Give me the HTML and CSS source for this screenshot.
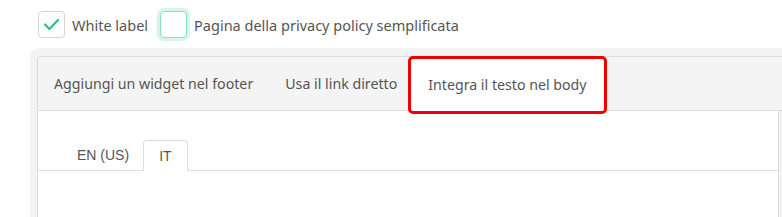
FILE: index.html
```html
<!DOCTYPE html>
<html lang="it">
<head>
<meta charset="utf-8">
<link rel="stylesheet" href="styles.css">
</head>
<body>
<div class="options">
  <label class="opt">
    <span class="box checked">
      <svg width="17" height="13" viewBox="0 0 17 13"><path d="M2 6.5 L6.5 11 L15 2" fill="none" stroke="#2fbf85" stroke-width="2.2" stroke-linecap="round" stroke-linejoin="round"/></svg>
    </span>
    <span class="opt-text">White label</span>
  </label>
  <label class="opt">
    <span class="box focused"></span>
    <span class="opt-text">Pagina della privacy policy semplificata</span>
  </label>
</div>
<div class="panel">
  <div class="inner">
    <div class="tabbar">
      <div class="tab">Aggiungi un widget nel footer</div>
      <div class="tab">Usa il link diretto</div>
      <div class="tab active">Integra il testo nel body</div>
    </div>
    <div class="content">
      <div class="langs">
        <div class="lang">EN (US)</div>
        <div class="lang active">IT</div>
      </div>
    </div>
  </div>
</div>
</body>
</html>
```
FILE: styles.css
```css
html, body { margin: 0; padding: 0; background: #fff; overflow: hidden; }
body {
  font-family: "Noto Sans", "Liberation Sans", sans-serif;
  color: #555;
  width: 782px;
  height: 217px;
}
.options {
  display: flex;
  align-items: center;
  padding: 11px 0 0 38px;
  height: 27px;
}
.opt { display: flex; align-items: center; }
.opt + .opt { margin-left: 12px; }
.box {
  box-sizing: border-box;
  width: 27px;
  height: 27px;
  border: 1px solid #d4d4d4;
  border-radius: 4px;
  display: flex;
  align-items: center;
  justify-content: center;
  background: #fff;
}
.box.focused {
  border-color: #7fe3c3;
  box-shadow: 0 0 0 3px #d6f6ea;
}
.opt-text {
  margin-left: 7px;
  font-size: 14.5px;
  color: #555;
}
.panel {
  margin: 10px 0 0 30px;
  background: #f3f3f3;
  border-top-left-radius: 9px;
  padding: 8px 0 0 7px;
  height: 171px;
  box-sizing: border-box;
}
.inner {
  border: 1px solid #dcdcdc;
  border-right: none;
  border-bottom: none;
  border-top-left-radius: 3px;
  height: 163px;
  box-sizing: border-box;
}
.tabbar {
  display: flex;
  height: 53px;
  background: #f4f4f4;
  border-bottom: 1px solid #dcdcdc;
}
.tab {
  padding: 0 16px;
  display: flex;
  align-items: center;
  font-size: 14.2px;
  color: #555;
}
.tab.active {
  background: #fff;
  margin-bottom: -1px;
  position: relative;
  padding: 0 17px;
  margin-left: -2px;
}
.tab.active::after {
  content: "";
  position: absolute;
  left: -3px;
  right: -3px;
  top: -1px;
  bottom: -3px;
  border: 3px solid #ee0000;
  border-radius: 5px;
}
.content {
  background: #fff;
  border-right: 1px solid #dcdcdc;
  margin-right: 3px;
  height: 109px;
  padding-top: 29px;
  box-sizing: border-box;
}
.langs {
  display: flex;
  padding-left: 24px;
  border-bottom: 1px solid #e0e0e0;
}
.lang {
  font-family: "Liberation Sans", Arial, sans-serif;
  font-size: 14px;
  color: #555;
  padding: 0 14px 0 15px;
  height: 30px;
  line-height: 31px;
}
.lang.active {
  border: 1px solid #dcdcdc;
  border-bottom: none;
  padding: 0 15px;
  border-radius: 4px 4px 0 0;
  margin-bottom: -1px;
  background: #fff;
}
```
